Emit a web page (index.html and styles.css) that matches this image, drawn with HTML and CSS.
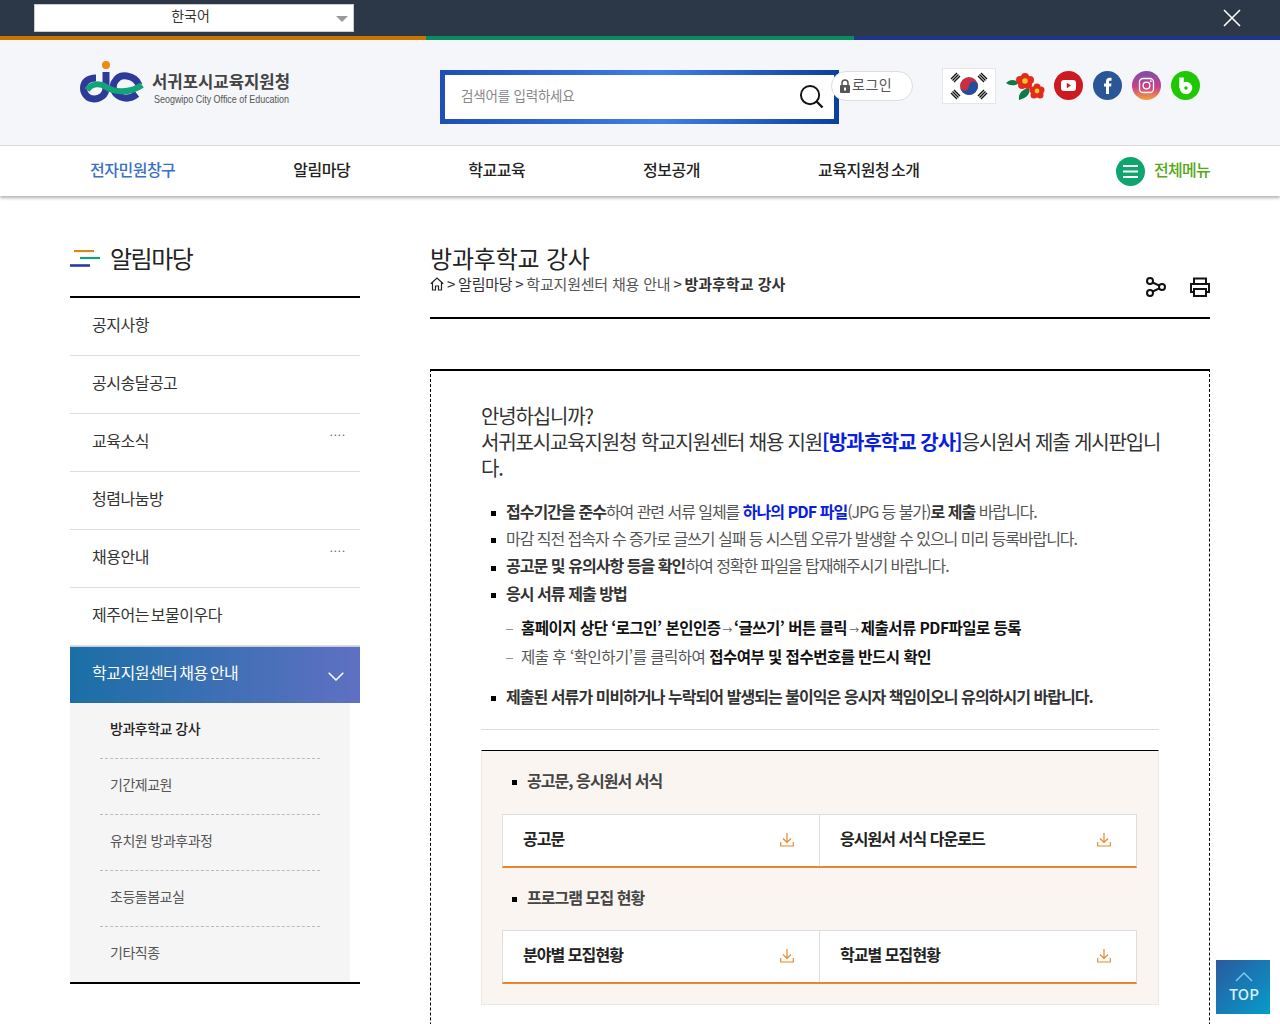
FILE: index.html
```html
<!DOCTYPE html>
<html lang="ko">
<head>
<meta charset="utf-8">
<title>방과후학교 강사</title>
<link rel="stylesheet" href="styles.css">
</head>
<body>
<div class="topbar">
  <div class="lang"><span>한국어</span><i class="lang-arrow"></i></div>
  <svg class="close" width="18" height="18" viewBox="0 0 18 18"><path d="M1 1L17 17M17 1L1 17" stroke="#fff" stroke-width="1.6" fill="none"/></svg>
</div>
<div class="strip"><i class="s1"></i><i class="s2"></i><i class="s3"></i></div>
<header class="header">
  <svg class="logo" width="215" height="50" viewBox="80 60 215 50">
    <circle cx="106" cy="65" r="4" fill="#ef8a12"/>
    <path d="M106 72V88C106 95 100 99 94 99C87 99 83.500 93 83.500 88C83.500 82 88 78 96 78" fill="none" stroke="#2e3a9a" stroke-width="7"/>
    <path d="M137 94C132 98 126 99 121 97C114 94 112 88 114 83C117 77 122 75 127 76C133 77 137 80 139 85" fill="none" stroke="#2e3a9a" stroke-width="7"/>
    <path d="M87 90C92 83 100 83 106 87C112 91 128 95 142 85" fill="none" stroke="#12a37b" stroke-width="6"/>
    <text class="logo-ko" x="152" y="88" textLength="138" lengthAdjust="spacingAndGlyphs">서귀포시교육지원청</text>
    <text class="logo-en" x="154" y="103" textLength="135" lengthAdjust="spacingAndGlyphs">Seogwipo City Office of Education</text>
  </svg>
  <div class="search">
    <div class="search-in">
      <span class="ph">검색어를 입력하세요</span>
      <svg width="25" height="25" viewBox="0 0 26 26"><circle cx="11.5" cy="11.5" r="9.5" fill="none" stroke="#111" stroke-width="2"/><path d="M18 18L24.5 24.5" stroke="#111" stroke-width="2.4"/></svg>
    </div>
  </div>
  <div class="login">
    <svg width="12" height="14" viewBox="0 0 12 14"><path d="M3 6V4A3 3 0 0 1 9 4V6" fill="none" stroke="#555" stroke-width="1.5"/><rect x="1" y="6" width="10" height="8" rx="1" fill="#555"/><rect x="5" y="8.5" width="2" height="3" fill="#fff"/></svg>
    <span>로그인</span>
  </div>
  <svg class="flag" width="54" height="36" viewBox="0 0 54 36">
    <rect x=".5" y=".5" width="53" height="35" fill="#fff" stroke="#e6e6e6"/>
    <circle cx="27" cy="18" r="9" fill="#c8303f"/>
    <path d="M18 18A4.5 4.5 0 0 0 27 18A4.5 4.5 0 0 1 36 18A9 9 0 0 1 18 18Z" fill="#1f4ea3"/>
    <g stroke="#111" stroke-width="1.4" fill="none">
      <path d="M9 11L15 5M10.5 12.5L16.5 6.5M12 14L18 8"/>
      <path d="M36 8L42 14M37.5 6.5L43.5 12.5M39 5L45 11"/>
      <path d="M9 25L15 31M10.5 23.500L16.500 29.500M12 22L18 28"/>
      <path d="M36 28L42 22M37.500 29.500L43.500 23.500M39 31L45 25"/>
    </g>
  </svg>
  <svg class="flower" width="40" height="30" viewBox="0 0 40 30">
    <path d="M0 11C4 7 9 7 13 11C9 14 4 14 0 11Z" fill="#0e7a45"/>
    <path d="M23 16C25 21 21 26 13 28C12 22 16 17 23 16Z" fill="#0e7a45"/>
    <g fill="#e52a1c">
      <circle cx="19" cy="5" r="4"/><circle cx="24" cy="8" r="4"/><circle cx="22" cy="13" r="4"/><circle cx="16" cy="13" r="4"/><circle cx="14" cy="8" r="4"/>
    </g>
    <circle cx="19" cy="9" r="2.800" fill="#f4c62a"/>
    <g fill="#e52a1c">
      <circle cx="31" cy="15" r="3.500"/><circle cx="35" cy="18" r="3.500"/><circle cx="34" cy="23" r="3.500"/><circle cx="28" cy="23" r="3.500"/><circle cx="27" cy="18" r="3.500"/>
    </g>
    <circle cx="31" cy="19" r="2.400" fill="#f4c62a"/>
  </svg>
  <div class="sns">
    <svg width="29" height="29" viewBox="0 0 29 29"><circle cx="14.500" cy="14.500" r="14.500" fill="#cc1a20"/><rect x="7" y="9" width="15" height="11" rx="3" fill="#fff"/><path d="M12.800 11.800V17.200L17 14.500Z" fill="#cc1a20"/></svg>
    <svg width="29" height="29" viewBox="0 0 29 29"><circle cx="14.500" cy="14.500" r="14.500" fill="#2a5596"/><path d="M13 23V15.500H11V12.500H13V10.500C13 8 14.500 6.800 16.500 6.800H18.500V9.700H17C16.200 9.700 16 10.100 16 10.800V12.500H18.500L18.100 15.500H16V23Z" fill="#fff"/></svg>
    <svg width="29" height="29" viewBox="0 0 29 29"><defs><linearGradient id="ig" x1="0" y1="0" x2="0" y2="1"><stop offset="0" stop-color="#7a4fa8"/><stop offset=".55" stop-color="#c9418a"/><stop offset="1" stop-color="#f7a13a"/></linearGradient></defs><circle cx="14.500" cy="14.500" r="14.500" fill="url(#ig)"/><rect x="7.500" y="7.500" width="14" height="14" rx="3.500" fill="none" stroke="#fff" stroke-width="1.300"/><circle cx="14.500" cy="14.500" r="3.400" fill="none" stroke="#fff" stroke-width="1.300"/><circle cx="18.800" cy="10.200" r=".9" fill="#fff"/></svg>
    <svg width="29" height="29" viewBox="0 0 29 29"><circle cx="14.500" cy="14.500" r="14.500" fill="#1fc800"/><path d="M10.500 6.500V17" stroke="#fff" stroke-width="4.500" fill="none"/><circle cx="15" cy="17" r="4" fill="none" stroke="#fff" stroke-width="4.500"/></svg>
  </div>
</header>
<nav class="gnb">
  <a class="on">전자민원창구</a>
  <a>알림마당</a>
  <a>학교교육</a>
  <a>정보공개</a>
  <a>교육지원청 소개</a>
  <div class="allmenu">
    <svg width="29" height="29" viewBox="0 0 29 29"><circle cx="14.500" cy="14.500" r="14.500" fill="#0fa56f"/><path d="M7 9H22M7 14.500H22M7 20H22" stroke="#fff" stroke-width="1.800"/></svg>
    <span>전체메뉴</span>
  </div>
</nav>
<div class="page">
  <aside class="side">
    <div class="side-title">
      <svg width="30" height="17" viewBox="0 0 30 17"><path d="M4 1H24" stroke="#d9861a" stroke-width="2.200"/><path d="M10 8H30" stroke="#12a37b" stroke-width="2.200"/><path d="M0 15.500H20" stroke="#2e3a9a" stroke-width="2.600"/></svg>
      <h2>알림마당</h2>
    </div>
    <ul class="menu">
      <li>공지사항</li>
      <li>공시송달공고</li>
      <li>교육소식<span class="dots">....</span></li>
      <li>청렴나눔방</li>
      <li>채용안내<span class="dots">....</span></li>
      <li>제주어는 보물이우다</li>
      <li class="active">학교지원센터 채용 안내
        <svg width="16" height="9" viewBox="0 0 16 9"><path d="M.7 .7L8 8L15.300 .7" fill="none" stroke="#fff" stroke-width="1.500"/></svg>
      </li>
    </ul>
    <ul class="sub">
      <li class="cur">방과후학교 강사</li>
      <li>기간제교원</li>
      <li>유치원 방과후과정</li>
      <li>초등돌봄교실</li>
      <li>기타직종</li>
    </ul>
    <div class="side-end"></div>
  </aside>
  <main class="main">
    <div class="head">
      <h1>방과후학교 강사</h1>
      <div class="crumb-row">
        <div class="crumb">
          <svg width="14" height="14" viewBox="0 0 14 14"><path d="M.8 6.800L7 1L13.200 6.800M2.500 5.500V13H5.500V9H8.500V13H11.500V5.500" fill="none" stroke="#222" stroke-width="1.200"/></svg>
          <span class="sep">&gt;</span><span class="c1">알림마당</span><span class="sep">&gt;</span><span class="c2">학교지원센터 채용 안내</span><span class="sep">&gt;</span><b>방과후학교 강사</b>
        </div>
        <div class="tools">
          <svg width="20" height="20" viewBox="0 0 20 20"><g fill="none" stroke="#111" stroke-width="2"><circle cx="4" cy="4" r="3"/><circle cx="4" cy="16" r="3"/><circle cx="16" cy="10" r="3"/><path d="M6.700 5.500L13.300 8.700M6.700 14.500L13.300 11.300"/></g></svg>
          <svg width="20" height="20" viewBox="0 0 20 20"><g fill="none" stroke="#111" stroke-width="2"><path d="M4 7V1.500H16V7"/><path d="M4 15H1V7H19V15H16"/><rect x="4" y="12" width="12" height="7"/></g></svg>
        </div>
      </div>
    </div>
    <section class="box">
      <p class="intro">안녕하십니까?<br>서귀포시교육지원청 학교지원센터 채용 지원<strong>[방과후학교 강사]</strong>응시원서 제출 게시판입니다.</p>
      <ul class="notes">
        <li><b>접수기간을 준수</b>하여 관련 서류 일체를 <b class="blue">하나의 PDF 파일</b>(JPG 등 불가)<b>로 제출</b> 바랍니다.</li>
        <li>마감 직전 접속자 수 증가로 글쓰기 실패 등 시스템 오류가 발생할 수 있으니 미리 등록바랍니다.</li>
        <li><b>공고문 및 유의사항 등을 확인</b>하여 정확한 파일을 탑재해주시기 바랍니다.</li>
        <li><b>응시 서류 제출 방법</b></li>
      </ul>
      <ul class="steps">
        <li><b>홈페이지 상단 ‘로그인’ 본인인증</b><span class="arr">→</span><b>‘글쓰기’ 버튼 클릭</b><span class="arr">→</span><b>제출서류 PDF파일로 등록</b></li>
        <li>제출 후 ‘확인하기’를 클릭하여 <b>접수여부 및 접수번호를 반드시 확인</b></li>
      </ul>
      <ul class="notes last">
        <li><b>제출된 서류가 미비하거나 누락되어 발생되는 불이익은 응시자 책임이오니 유의하시기 바랍니다.</b></li>
      </ul>
      <div class="panel">
        <h3>공고문, 응시원서 서식</h3>
        <div class="files">
          <a>공고문<svg class="dl" width="14" height="14" viewBox="0 0 14 14"><path d="M7 0V9M3 5.500L7 9.500L11 5.500M.7 9V13H13.300V9" fill="none" stroke="#e8872c" stroke-width="1.200"/></svg></a>
          <a>응시원서 서식 다운로드<svg class="dl" width="14" height="14" viewBox="0 0 14 14"><path d="M7 0V9M3 5.500L7 9.500L11 5.500M.7 9V13H13.300V9" fill="none" stroke="#e8872c" stroke-width="1.200"/></svg></a>
        </div>
        <h3>프로그램 모집 현황</h3>
        <div class="files">
          <a>분야별 모집현황<svg class="dl" width="14" height="14" viewBox="0 0 14 14"><path d="M7 0V9M3 5.500L7 9.500L11 5.500M.7 9V13H13.300V9" fill="none" stroke="#e8872c" stroke-width="1.200"/></svg></a>
          <a>학교별 모집현황<svg class="dl" width="14" height="14" viewBox="0 0 14 14"><path d="M7 0V9M3 5.500L7 9.500L11 5.500M.7 9V13H13.300V9" fill="none" stroke="#e8872c" stroke-width="1.200"/></svg></a>
        </div>
      </div>
    </section>
  </main>
</div>
<a class="totop">
  <svg width="18" height="11" viewBox="0 0 18 11"><path d="M1 10L9 2L17 10" fill="none" stroke="#7cc8ee" stroke-width="1.500"/></svg>
  <span>TOP</span>
</a>
</body>
</html>
```
FILE: styles.css
```css
* { box-sizing: border-box; }
html, body { margin: 0; padding: 0; height: 1024px; overflow: hidden; }
body { font-family: "Noto Sans CJK KR", "Noto Sans", sans-serif; color: #222; background: #fff; letter-spacing: -0.5px; }
ul { list-style: none; margin: 0; padding: 0; }
h1, h2, h3, p { margin: 0; font-weight: 400; }

.topbar { height: 36px; background: #2c3847; display: flex; align-items: flex-start; justify-content: space-between; padding: 4px 39px 0 34px; }
.lang { width: 320px; height: 28px; background: #fff; border: 1px solid #ccc; position: relative; text-align: center; font-size: 14px; line-height: 20px; color: #333; letter-spacing: 0; padding-right: 7px; }
.lang-arrow { position: absolute; right: 5px; top: 11px; width: 0; height: 0; border-left: 6px solid transparent; border-right: 6px solid transparent; border-top: 6px solid #999; }
.close { margin-top: 5px; }
.strip { display: flex; height: 4px; }
.strip i { display: block; }
.s1 { width: 426px; background: #c77700; }
.s2 { width: 428px; background: #0a8c62; }
.s3 { flex: 1; background: #1f3688; }

.header { height: 106px; background: #f4f6f9; border-bottom: 1px solid #ddd; display: flex; align-items: flex-start; padding: 20px 0 0 80px; position: relative; }
.logo-ko { font-size: 17px; font-weight: 700; fill: #444; letter-spacing: 0; }
.logo-en { font-family: "Liberation Sans Narrow", "Liberation Sans", sans-serif; font-size: 11.5px; fill: #555; letter-spacing: 0; }
.search { width: 399px; height: 54px; margin: 10px 0 0 145px; padding: 5px; background: linear-gradient(90deg, #1d4fb4, #2f68cf 30%, #3f80e8 55%, #0b3f9c); }
.search-in { height: 44px; background: #fff; display: flex; align-items: center; justify-content: space-between; padding: 0 10px 4px 16px; }
.search-in svg { margin-top: 3px; }
.ph { font-size: 13.5px; color: #888; letter-spacing: -0.2px; margin-top: -1px; }
.login { width: 82px; height: 30px; margin: 11px 0 0 -8px; background: #fff; border: 1px solid #ddd; border-radius: 15px; display: flex; align-items: center; padding-left: 7px; gap: 1px; font-size: 14px; color: #555; letter-spacing: .5px; position: relative; }
.login span { margin-top: -4px; }
.flag { margin: 8px 0 0 29px; }
.flower { margin: 12px 0 0 10px; }
.sns { display: flex; gap: 10px; margin: 11px 0 0 8px; }

.gnb { height: 50px; background: #fff; display: flex; align-items: center; gap: 118px; padding: 0 70px 4px 90px; box-shadow: 0 2px 3px rgba(0,0,0,.3); position: relative; font-size: 16px; font-weight: 500; color: #222; word-spacing: -2px; }
.gnb .on { color: #3a70c8; }
.allmenu { margin-left: auto; display: flex; align-items: center; gap: 9px; color: #55a818; margin-top: 4px; letter-spacing: -.75px; }
.allmenu span { margin-top: -4px; }

.page { display: flex; padding: 30px 70px 0; gap: 70px; }
.side { width: 290px; flex: none; }
.side-title { display: flex; align-items: center; gap: 10px; border-bottom: 2px solid #000; height: 72px; padding-bottom: 6px; }
.side-title h2 { font-size: 24px; letter-spacing: -1.5px; line-height: 32px; color: #222; }
.menu li { height: 58px; border-bottom: 1px solid #ddd; display: flex; align-items: center; justify-content: space-between; padding: 0 14px 6px 22px; font-size: 16px; color: #333; word-spacing: -2px; }
.dots { font-size: 11px; letter-spacing: 1px; margin: 0 0 18px; color: #666; }
.menu .active { border-bottom: 0; height: 57px; border-top: 1px solid #c6cfdc; background: linear-gradient(90deg, #1a6fa6, #5f70c2); color: #fff; padding-right: 16px; }
.active svg { margin-top: 8px; }
.sub { width: 280px; background: #f5f5f5; padding: 0 30px; }
.sub li { height: 56px; border-bottom: 1px dashed #bbb; padding: 0 10px 5px; display: flex; align-items: center; font-size: 14px; color: #555; }
.sub li:last-child { border-bottom: 0; height: 55px; }
.sub .cur { color: #222; font-weight: 500; }
.side-end { height: 2px; background: #000; }

.main { width: 780px; flex: none; }
.head { border-bottom: 2px solid #000; height: 93px; padding-top: 16px; }
.head h1 { font-size: 24px; line-height: 32px; letter-spacing: -0.2px; color: #222; margin-bottom: 1px; }
.crumb-row { display: flex; justify-content: space-between; align-items: flex-start; }
.crumb { display: flex; align-items: center; font-size: 15px; line-height: 20px; height: 20px; color: #333; letter-spacing: -0.25px; margin-top: -1px; }
.crumb .sep { margin: 0 3px; }
.crumb .c2 { color: #555; letter-spacing: -0.2px; }
.crumb b { font-weight: 700; color: #333; letter-spacing: 0; }
.tools { display: flex; gap: 24px; margin-top: 2px; }

.box { margin-top: 50px; border-top: 2px solid #000; border-left: 1px dashed #000; border-right: 1px dashed #000; padding: 32px 50px 200px; }
.intro { font-size: 20px; line-height: 26px; color: #333; letter-spacing: -1.15px; margin-right: -2px; }
.intro strong { color: #0a1ee0; font-weight: 700; letter-spacing: -1px; }
.notes { margin-top: 17px; font-size: 16px; line-height: 27.2px; color: #555; letter-spacing: -1.05px; }
.notes li { padding-left: 25px; }
.notes li::before { content: ""; display: inline-block; width: 5px; height: 5px; background: #000; margin: 0 10px 0 -15px; vertical-align: middle; }
.notes b { color: #333; font-weight: 700; letter-spacing: -.95px; }
.notes b.blue { color: #0a1ee0; }
.notes.last { margin-top: 12px; padding-bottom: 19px; border-bottom: 1px solid #ddd; }
.steps { margin-top: 6px; font-size: 15.5px; line-height: 29px; color: #555; }
.steps li { padding-left: 40px; }
.steps li::before { content: ""; display: inline-block; width: 7px; height: 1px; background: #999; margin: 0 8px 0 -15px; vertical-align: middle; }
.steps b { color: #111; font-weight: 700; }
.arr { font-size: 10px; line-height: 1; margin: 0 2px; color: #666; }

.panel { margin-top: 20px; border: 1px solid #ebe8e5; border-top: 1px solid #000; background: #faf5f1; padding: 17px 21px 20px 20px; }
.panel h3 { font-size: 16px; font-weight: 700; line-height: 24px; color: #444; padding-left: 25px; letter-spacing: -.95px; }
.panel h3::before { content: ""; display: inline-block; width: 5px; height: 5px; background: #000; margin: 0 10px 0 -15px; vertical-align: middle; }
.panel .files + h3 { margin-top: 17px; }
.files { margin-top: 22px; display: grid; grid-template-columns: 317px 318px; background: #fff; border: 1px solid #ddd; border-bottom: 2px solid #e8872c; height: 54px; }
.files + h3 + .files { margin-top: 21px; }
.files a { display: flex; align-items: center; justify-content: space-between; padding: 0 27px 5px 20px; font-size: 16px; font-weight: 700; color: #222; letter-spacing: -.95px; }
.files a:first-child { border-right: 1px solid #ddd; padding-right: 25px; }
.dl { margin-top: 4px; }

.totop { position: fixed; right: 10px; bottom: 10px; width: 54px; height: 54px; background: linear-gradient(135deg, #2a5a9e, #059ccb); display: flex; flex-direction: column; align-items: center; padding: 11px 0 0 2px; color: #d8f0fb; font-size: 15px; line-height: 18px; font-weight: 500; letter-spacing: 0; }
.totop svg { display: block; margin-bottom: 3px; }
```
